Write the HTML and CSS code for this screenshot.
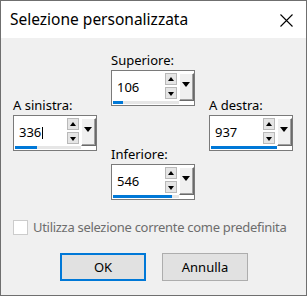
FILE: index.html
```html
<!doctype html>
<html>
	<head>
		<meta charset="utf-8"/>
		<title>Selezione personalizzata</title>
		<link rel="stylesheet" href="styles.css">
	</head>
	<body>
		<div class='dialog'>
			<header class='titlebar'>
				<span class='title'>Selezione personalizzata</span>
				<svg class='close' width='13' height='13' viewBox='0 0 13 13'>
					<path d='M0.5 0.5 L12.5 12.5 M12.5 0.5 L0.5 12.5' stroke='#000' stroke-width='1.1' fill='none'/>
				</svg>
			</header>

			<main class='content'>
				<section class='spins'>
					<div class='col side'>
						<div class='group'>
							<label>A sinistra:</label>
							<div class='spin'>
								<span class='value'>336<span class='caret'></span></span>
								<span class='btn up'></span>
								<span class='btn down'></span>
								<span class='drop'></span>
								<span class='track'><span class='bar' style='width:22px'></span></span>
							</div>
						</div>
					</div>

					<div class='col center'>
						<div class='group'>
							<label>Superiore:</label>
							<div class='spin'>
								<span class='value'>106</span>
								<span class='btn up'></span>
								<span class='btn down'></span>
								<span class='drop'></span>
								<span class='track'><span class='bar' style='width:10px'></span></span>
							</div>
						</div>
						<div class='group lower'>
							<label>Inferiore:</label>
							<div class='spin'>
								<span class='value'>546</span>
								<span class='btn up'></span>
								<span class='btn down'></span>
								<span class='drop'></span>
								<span class='track'><span class='bar' style='width:59px'></span></span>
							</div>
						</div>
					</div>

					<div class='col side'>
						<div class='group'>
							<label>A destra:</label>
							<div class='spin'>
								<span class='value'>937</span>
								<span class='btn up'></span>
								<span class='btn down'></span>
								<span class='drop'></span>
								<span class='track'><span class='bar' style='width:66px'></span></span>
							</div>
						</div>
					</div>
				</section>

				<div class='check'>
					<span class='box'></span>
					<span class='check-text'>Utilizza selezione corrente come predefinita</span>
				</div>

				<div class='buttons'>
					<button class='button default'>OK</button>
					<button class='button'>Annulla</button>
				</div>
			</main>
		</div>
	</body>
</html>
```

FILE: styles.css
```css
html, body {
	margin: 0;
	padding: 0;
	width: 307px;
	height: 296px;
	overflow: hidden;
	background-color: #f0f0f0;
}
body * {
	box-sizing: border-box;
	font-family: "Noto Sans", "Segoe UI", Arial, sans-serif;
}

.dialog {
	width: 307px;
	height: 296px;
	border: 1px solid #6f6f6f;
	background-color: #f0f0f0;
	display: flex;
	flex-direction: column;
}

.titlebar {
	height: 37px;
	flex: none;
	background-color: #fff;
	display: flex;
	align-items: center;
	justify-content: space-between;
	padding: 0 13px 0 9px;
}
.title {
	font-size: 15.5px;
	color: #000;
	line-height: 20px;
	padding-bottom: 1px;
}
.close {
	display: block;
	margin-top: 1px;
}

.content {
	flex: 1;
	display: flex;
	flex-direction: column;
	padding: 0 0 0 12px;
}

/* spin controls */
.spins {
	display: flex;
	gap: 14px;
}
.col {
	width: 84px;
	display: flex;
	flex-direction: column;
}
.center {
	padding-top: 13px;
}
.side {
	padding-top: 58px;
}
.group.lower {
	margin-top: 39px;
}

label {
	display: block;
	height: 19px;
	font-size: 13px;
	line-height: 19px;
	color: #000;
	white-space: nowrap;
}

.spin {
	position: relative;
	width: 84px;
	height: 36px;
	background-color: #fff;
	border: 1px solid #7a7a7a;
}
.value {
	position: absolute;
	left: 5px;
	top: 7px;
	font-size: 13px;
	line-height: 18px;
	color: #000;
}
.caret {
	display: inline-block;
	width: 1px;
	height: 12px;
	margin-left: 1px;
	background-color: #000;
	vertical-align: -2px;
}

.btn {
	position: absolute;
	left: 53px;
	width: 12px;
	height: 12px;
	background-color: #e5e5e5;
	border: 1px solid #b9b9b9;
}
.btn.up {
	top: 2px;
}
.btn.down {
	top: 16px;
}
.btn::after {
	content: '';
	position: absolute;
	left: 2px;
	top: 3px;
	border-left: 3px solid transparent;
	border-right: 3px solid transparent;
}
.btn.up::after {
	border-bottom: 4px solid #000;
}
.btn.down::after {
	top: 4px;
	border-top: 4px solid #000;
}

.drop {
	position: absolute;
	left: 67px;
	top: 2px;
	width: 15px;
	height: 28px;
	background-color: #f0f0f0;
	border-top: 1px solid #fff;
	border-left: 1px solid #fff;
	border-right: 1px solid #6a6a6a;
	border-bottom: 1px solid #6a6a6a;
	box-shadow: inset -1px -1px 0 #a0a0a0;
}
.drop::after {
	content: '';
	position: absolute;
	left: 2px;
	top: 8px;
	border-left: 4px solid transparent;
	border-right: 4px solid transparent;
	border-top: 5px solid #000;
}

.track {
	position: absolute;
	left: 1px;
	top: 30px;
	width: 66px;
	height: 3px;
	background-color: #e6e6e6;
}
.bar {
	display: block;
	height: 3px;
	background-color: #0078d7;
}

/* checkbox */
.check {
	display: flex;
	align-items: center;
	gap: 5px;
	margin-top: 18px;
	height: 19px;
}
.box {
	width: 15px;
	height: 15px;
	background-color: #fff;
	border: 1px solid #cccccc;
	flex: none;
}
.check-text {
	font-size: 13px;
	line-height: 19px;
	letter-spacing: -0.3px;
	color: #6d6d6d;
	white-space: nowrap;
}

/* buttons */
.buttons {
	display: flex;
	gap: 16px;
	margin-top: 16px;
	padding-left: 47px;
}
.button {
	width: 86px;
	height: 28px;
	margin: 0;
	padding: 0;
	font-size: 13px;
	color: #000;
	background-color: #e1e1e1;
	border: 1px solid #adadad;
}
.button.default {
	border: 2px solid #0078d7;
}
```
